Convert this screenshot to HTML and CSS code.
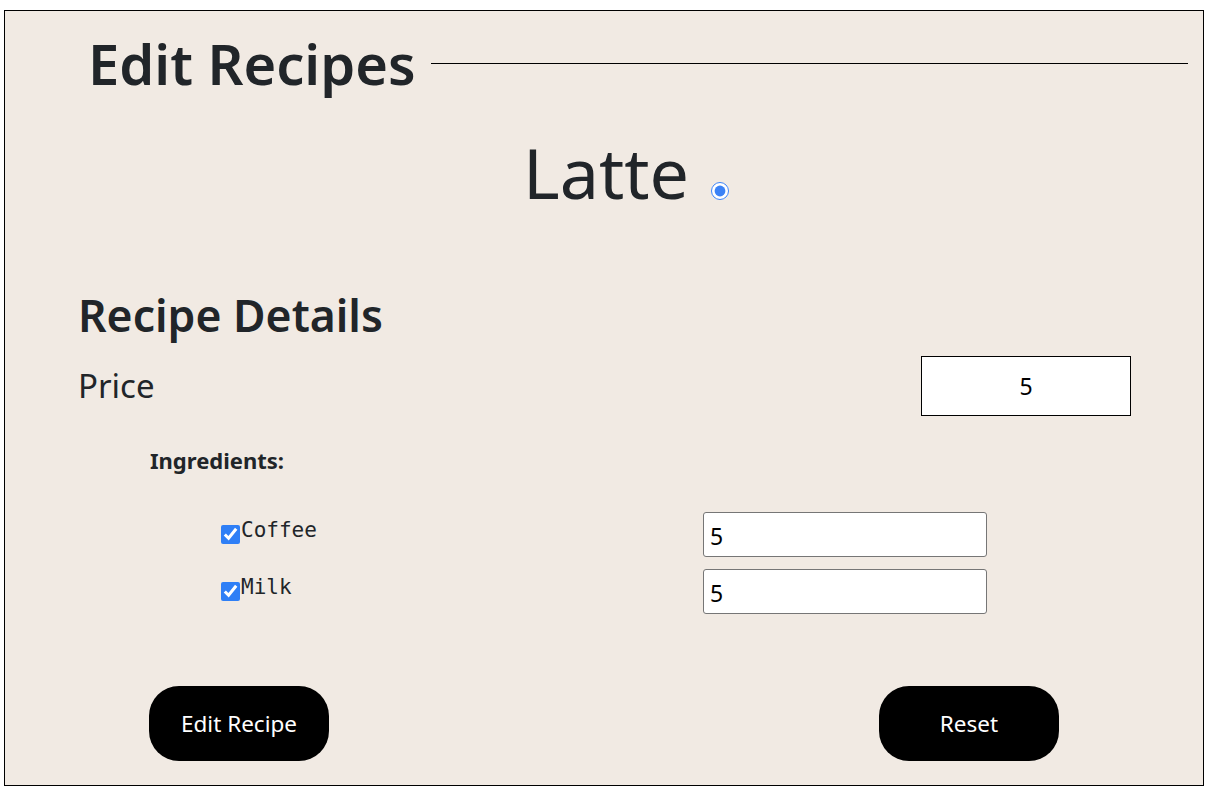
FILE: index.html
```html
<!DOCTYPE html>
<html>
<head>
<meta charset="utf-8">
<link rel="stylesheet" href="styles.css">
</head>
<body>
<div class="page">
  <div class="title-row">
    <h1 class="title">Edit Recipes</h1>
    <div class="rule"></div>
  </div>
  <div class="recipe-name">
    <span class="latte">Latte</span>
    <input type="radio" class="radio" checked>
  </div>
  <h2 class="section">Recipe Details</h2>
  <div class="price-row">
    <span class="price-label">Price</span>
    <input class="price-input" type="text" value="5">
  </div>
  <div class="ingredients-label">Ingredients:</div>
  <div class="ingredients">
    <div class="ing-row">
      <label class="ing-name"><input type="checkbox" class="check" checked>Coffee</label>
      <input class="ing-input" type="text" value="5">
    </div>
    <div class="ing-row">
      <label class="ing-name"><input type="checkbox" class="check" checked>Milk</label>
      <input class="ing-input" type="text" value="5">
    </div>
  </div>
  <div class="buttons">
    <button class="btn">Edit Recipe</button>
    <button class="btn">Reset</button>
  </div>
</div>
</body>
</html>
```

FILE: styles.css
```css
html, body {
  margin: 0;
  padding: 0;
  background: #ffffff;
}
body {
  font-family: "Noto Sans", "Open Sans", sans-serif;
  color: #212529;
}
.page {
  box-sizing: border-box;
  width: 1200px;
  height: 776px;
  margin: 10px 0 0 4px;
  border: 1px solid #000;
  background: #f1eae3;
  display: flex;
  flex-direction: column;
}
.title-row {
  display: flex;
  align-items: center;
  height: 104px;
}
.title {
  margin: 0 0 0 83px;
  font-size: 56px;
  font-weight: 600;
  line-height: 1;
}
.rule {
  flex: 1;
  height: 1px;
  background: #000;
  margin: 0 15px 0 15px;
}
.recipe-name {
  display: flex;
  justify-content: center;
  align-items: baseline;
  height: 110px;
  padding-left: 44px;
}
.latte {
  font-size: 70px;
  font-weight: 400;
  line-height: 110px;
  padding-top: 2px;
}
.radio {
  width: 18px;
  height: 18px;
  margin: 0 0 0 22px;
  position: relative;
  top: 1px;
  accent-color: #3b82f6;
}
.section {
  margin: 65px 0 0 73px;
  font-size: 44.5px;
  font-weight: 600;
  line-height: 50px;
}
.price-row {
  display: flex;
  justify-content: space-between;
  align-items: center;
  margin: 16px 72px 0 73px;
}
.price-label {
  font-size: 33px;
  line-height: 40px;
}
.price-input {
  box-sizing: border-box;
  width: 210px;
  height: 60px;
  border: 1px solid #000;
  border-radius: 0;
  background: #fff;
  text-align: center;
  font-family: "Noto Sans", sans-serif;
  font-size: 23px;
  color: #000;
  padding: 0;
}
.ingredients-label {
  margin: 29px 0 0 145px;
  font-size: 22px;
  font-weight: 700;
  line-height: 30px;
}
.ingredients {
  margin: 37px 0 0 216px;
  display: flex;
  flex-direction: column;
  gap: 12px;
}
.ing-row {
  display: flex;
  align-items: flex-start;
}
.ing-name {
  width: 482px;
  display: flex;
  align-items: flex-start;
  font-family: "DejaVu Sans Mono", "Liberation Mono", monospace;
  font-size: 21px;
  line-height: 26px;
  padding-top: 5px;
  color: #212529;
}
.check {
  width: 19px;
  height: 19px;
  margin: 8px 1px 0 0;
  accent-color: #2f7ff6;
}
.ing-input {
  box-sizing: border-box;
  width: 284px;
  height: 45px;
  border: 1px solid #767676;
  border-radius: 3px;
  background: #fff;
  font-family: "Noto Sans", sans-serif;
  font-size: 23px;
  color: #000;
  padding: 2px 0 0 6px;
}
.buttons {
  display: flex;
  justify-content: space-between;
  margin: 72px 144px 0 144px;
}
.btn {
  width: 180px;
  height: 75px;
  border: none;
  border-radius: 30px;
  background: #000;
  color: #fff;
  font-family: "Noto Sans", sans-serif;
  font-size: 22.5px;
  cursor: pointer;
}
```
